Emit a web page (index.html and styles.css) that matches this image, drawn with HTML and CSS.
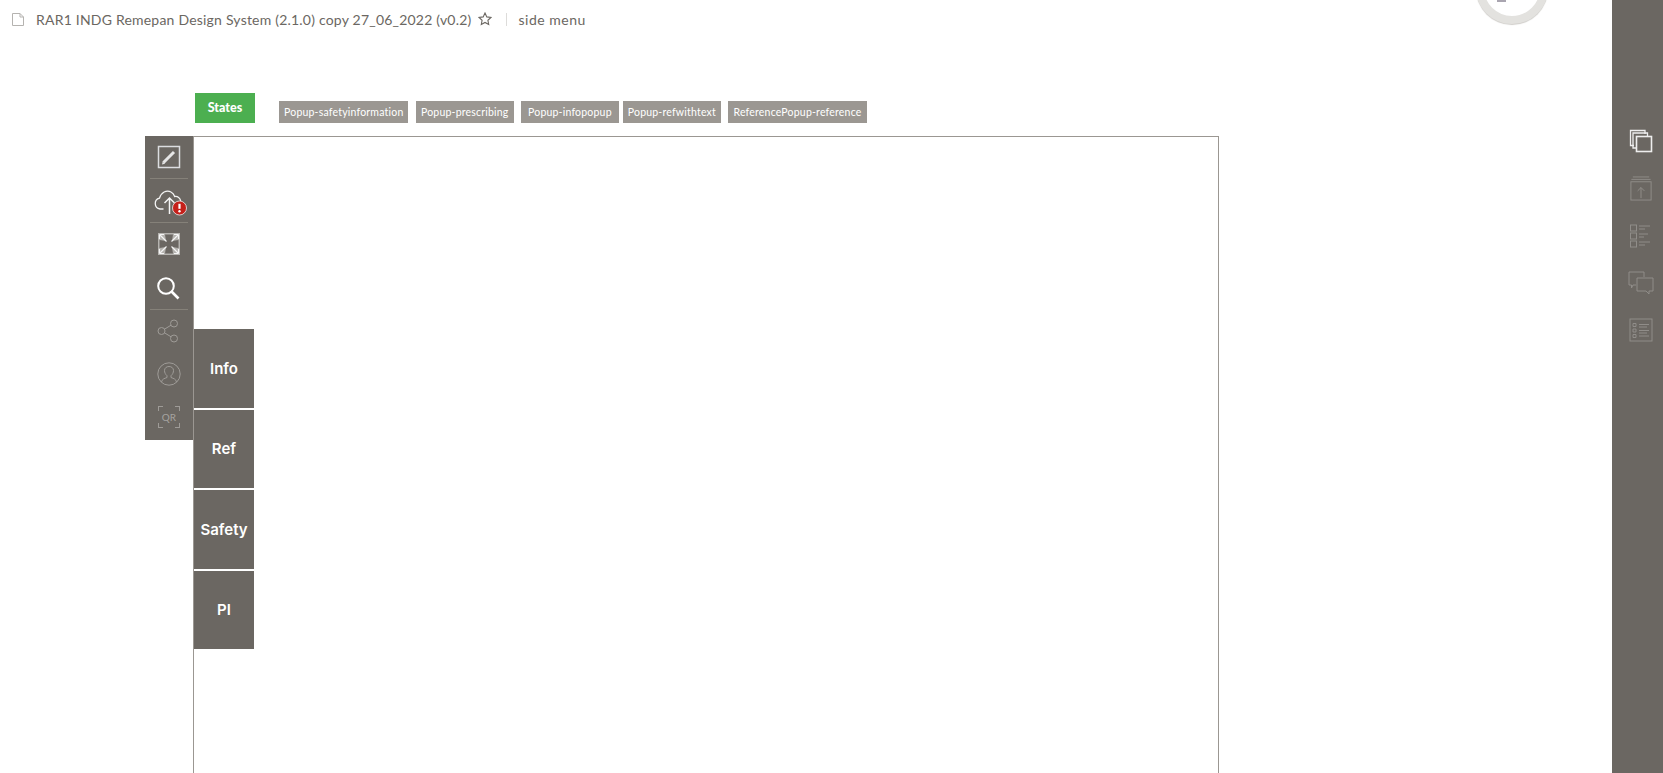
FILE: index.html
```html
<!DOCTYPE html>
<html lang="en">
<head>
    <meta charset="UTF-8">
    <title>side menu</title>
    <link rel="stylesheet" href="styles.css">
</head>
<body>
    <div class="page">
        <div class="main">
            <div class="topbar">
                <svg class="file-icon" width="12" height="13" viewBox="0 0 12 13"><path d="M.5.5h7.500l3.500 3.500v8.500h-11z M8 .5v3.500h3.500" fill="none" stroke="#b5b3b0"/></svg>
                <span class="file-name">RAR1 INDG Remepan Design System (2.1.0) copy 27_06_2022 (v0.2)</span>
                <svg class="star" width="14" height="14" viewBox="0 0 14 14"><path d="M7 1l1.800 3.900 4.200.5-3.100 2.900.8 4.200L7 10.400l-3.700 2.100.8-4.200L1 5.400l4.200-.5z" fill="none" stroke="#6b6762" stroke-width="1.100"/></svg>
                <span class="sep"></span>
                <span class="page-name">side menu</span>
            </div>

            <div class="states-row">
                <div class="states">States</div>
                <div class="popups">
                    <span class="popup">Popup-safetyinformation</span>
                    <span class="popup">Popup-prescribing</span>
                    <span class="popup tight">Popup-infopopup</span>
                    <span class="popup">Popup-refwithtext</span>
                    <span class="popup">ReferencePopup-reference</span>
                </div>
            </div>

            <div class="stage">
                <div class="tools">
                    <div class="tool line">
                        <svg class="up1" width="24" height="24" viewBox="0 0 24 24" fill="none"><rect x="1.500" y="1.500" width="21" height="21" stroke="#dcdde0" stroke-width="1.500"/><path d="M6.500 17.500L17 7" stroke="#e6e6e6" stroke-width="3"/><path d="M5 19.500l.7-3 2.300 2.300z" fill="#e6e6e6"/></svg>
                    </div>
                    <div class="tool line">
                        <svg width="36" height="30" viewBox="-1.500 -1 36 30" fill="none"><path d="M11 22H7.500a5.500 5.500 0 0 1-.5-10.800C8.500 5.500 14 2.500 18.500 5c2 1 3.200 3 3.700 4.500 3-.5 5.500 1.500 6 4.500" stroke="#f4f4f4" stroke-width="1.300"/><path d="M17 27V11M12 16l5-5 5 5" stroke="#f4f4f4" stroke-width="1.500"/><circle cx="27" cy="21" r="7" fill="#c5201a" stroke="#eee" stroke-width=".8"/><path d="M27 16.800v5" stroke="#fff" stroke-width="2.200"/><circle cx="27" cy="24.300" r="1.200" fill="#fff"/></svg>
                    </div>
                    <div class="tool">
                        <svg width="24" height="24" viewBox="0 0 24 24" fill="none"><rect x="1" y="1" width="22" height="22" fill="#b5b3af"/><path d="M8 2.500h8l-1 6.500 6.500-1v8L15 15l1 6.500H8L9 15l-6.500 1V8L9 9z" fill="#6b6762"/><path d="M3 3l6.500 6.500M21 3l-6.500 6.500M3 21l6.500-6.500M21 21l-6.500-6.500" stroke="#f4f4f4" stroke-width="1.200"/><path d="M2.500 2.500h4.500M2.500 2.500V7M21.500 2.500H17M21.500 2.500V7M2.500 21.500H7M2.500 21.500V17M21.500 21.500H17M21.500 21.500V17" stroke="#f4f4f4" stroke-width="1.200"/></svg>
                    </div>
                    <div class="tool line">
                        <svg class="left1" width="24" height="24" viewBox="0 0 24 24" fill="none" stroke="#fff"><circle cx="10" cy="10" r="7.800" stroke-width="2"/><path d="M15.500 15.500l7 7" stroke-width="2.600"/></svg>
                    </div>
                    <div class="tool dim">
                        <svg class="left1" width="22" height="24" viewBox="0 0 22 24" fill="none" stroke="#c9c7c4"><circle cx="4.500" cy="12" r="3.500"/><circle cx="17" cy="4.500" r="3.500"/><circle cx="17" cy="19.500" r="3.500"/><path d="M7.500 10.200l6.500-4M7.500 13.800l6.500 4"/></svg>
                    </div>
                    <div class="tool dim">
                        <svg class="up1" width="24" height="24" viewBox="0 0 24 24" fill="none" stroke="#c9c7c4"><circle cx="12" cy="12" r="11.200"/><path d="M4.500 20c.5-3 3-3.500 5.500-4.500v-1.800C8.500 12.500 7.500 10.500 7.500 8.500 7.500 6 9.500 4.500 12 4.500s4.500 1.500 4.500 4c0 2-1 4-2.500 5.200v1.800c2.500 1 5 1.500 5.500 4.500"/></svg>
                    </div>
                    <div class="tool dim">
                        <div class="qr">QR</div>
                    </div>
                </div>
                <div class="canvas">
                    <div class="tab">Info</div>
                    <div class="tab">Ref</div>
                    <div class="tab">Safety</div>
                    <div class="tab">PI</div>
                </div>
            </div>
        </div>

        <div class="side">
            <svg width="24" height="24" viewBox="0 0 24 24" fill="none" stroke="#eeeeee" stroke-width="1.300"><path d="M5 16.500H1.500V1.500H16V5"/><path d="M7.500 19H4V4h14.500v3"/><rect x="7.500" y="7.500" width="15" height="15" stroke-width="1.600"/></svg>
            <svg class="off" width="24" height="25" viewBox="0 0 24 26" fill="none" stroke="#c9c7c4"><path d="M3.500 1h17M2 3.500h20"/><rect x="1.500" y="6" width="21" height="19"/><path d="M12 23V12M8.500 15.500L12 12l3.500 3.500"/></svg>
            <svg class="off" width="24" height="24" viewBox="0 0 24 24" fill="none" stroke="#c9c7c4"><rect x="1.500" y="1" width="6" height="6"/><rect x="1.500" y="9" width="6" height="6"/><rect x="1.500" y="17" width="6" height="6"/><path d="M10 2h11M10 5h6M10 10h9M10 13h5M10 18h11M10 21h6"/></svg>
            <svg class="off" width="26" height="24" viewBox="0 0 26 24" fill="none" stroke="#c9c7c4"><path d="M8 14H5l-1.500 3v-3H1V1h15v5"/><path d="M9 7h16v13h-4v3l-3-3H9z"/></svg>
            <svg class="off" width="24" height="24" viewBox="0 0 24 24" fill="none" stroke="#c9c7c4"><rect x="1" y="1" width="22" height="22"/><path d="M4 5.500h3v3H4zM4 11h3v3H4zM4 16.500h3v3H4zM10 6.500h10M10 9h8M10 12.500h10M10 15h8M10 18h10"/></svg>
        </div>
    </div>

    <!-- dial that sticks out of the top of the window -->
    <div class="dial"><span></span></div>
</body>
</html>
```

FILE: styles.css
```css
html, body {
    margin: 0;
    height: 100%;
    overflow: hidden;
    background: #fff;
}
body {
    font-family: "Lato", "Liberation Sans", sans-serif;
    color: #6b6762;
}
.page {
    display: flex;
    height: 100vh;
}
.main {
    display: flex;
    flex-direction: column;
    flex: 1;
    min-width: 0;
}

/* top line */
.topbar {
    display: flex;
    align-items: center;
    height: 38px;
    padding-left: 12px;
    font-size: 14px;
}
.file-name {
    margin-left: 12px;
    letter-spacing: 0.21px;
}
.star {
    margin-left: 6px;
}
.sep {
    width: 1px;
    height: 13px;
    margin: 0 12px 0 14px;
    background: #dddcda;
}
.page-name {
    letter-spacing: 0.5px;
}

/* states and popup buttons */
.states-row {
    display: flex;
    align-items: flex-end;
    height: 85px;
    margin-left: 195px;
    margin-bottom: 13px;
}
.states {
    width: 60px;
    height: 30px;
    line-height: 30px;
    text-align: center;
    background: #4caf50;
    color: #fff;
    font-size: 12.500px;
    font-weight: 900;
}
.popups {
    display: flex;
    gap: 7.500px;
    margin-left: 24px;
}
.popup {
    height: 22px;
    line-height: 22px;
    padding: 0 5px;
    background: #9b9792;
    color: #fff;
    font-size: 10.500px;
    letter-spacing: 0.2px;
    white-space: nowrap;
}
.popup.tight {
    padding: 0 7px;
    margin-right: -3.500px;
}

/* left tools + white artboard */
.stage {
    display: flex;
    align-items: flex-start;
    flex: 1;
    min-height: 0;
    margin-left: 145px;
}
.tools {
    width: 48px;
    height: 304px;
    background: #6b6762;
}
.tool {
    position: relative;
    display: flex;
    align-items: center;
    justify-content: center;
    height: 43.400px;
    box-sizing: border-box;
}
.tool.line::after {
    content: "";
    position: absolute;
    left: 5px;
    right: 5px;
    bottom: 0;
    height: 1px;
    background: #858179;
}
.up1 {
    margin-bottom: 2px;
}
.left1 {
    margin-right: 2px;
}
.dim {
    opacity: 0.55;
}
.qr {
    width: 22px;
    height: 22px;
    margin-bottom: 3px;
    line-height: 22px;
    text-align: center;
    font-size: 10px;
    color: #d6d5d3;
    background:
        linear-gradient(#c9c7c4, #c9c7c4) 0 0 / 5px 1px,
        linear-gradient(#c9c7c4, #c9c7c4) 0 0 / 1px 5px,
        linear-gradient(#c9c7c4, #c9c7c4) 100% 0 / 5px 1px,
        linear-gradient(#c9c7c4, #c9c7c4) 100% 0 / 1px 5px,
        linear-gradient(#c9c7c4, #c9c7c4) 0 100% / 5px 1px,
        linear-gradient(#c9c7c4, #c9c7c4) 0 100% / 1px 5px,
        linear-gradient(#c9c7c4, #c9c7c4) 100% 100% / 5px 1px,
        linear-gradient(#c9c7c4, #c9c7c4) 100% 100% / 1px 5px;
    background-repeat: no-repeat;
}
.canvas {
    display: flex;
    flex-direction: column;
    gap: 2px;
    width: 1026px;
    height: 100%;
    box-sizing: border-box;
    padding-top: 192px;
    border: 1px solid #9b9792;
    border-bottom: 0;
}
.tab {
    display: flex;
    align-items: center;
    justify-content: center;
    width: 60px;
    height: 78.500px;
    background: #6b6762;
    color: #fff;
    font-family: "Inter", "Liberation Sans", sans-serif;
    font-size: 15px;
    font-weight: 600;
}

/* right panel */
.side {
    display: flex;
    flex-direction: column;
    align-items: center;
    gap: 23px;
    width: 51px;
    padding-top: 129px;
    background: #6b6762;
    box-sizing: border-box;
}
.side svg {
    flex: none;
    margin-left: 6px;
}
.side .off {
    opacity: 0.4;
}

.dial {
    position: absolute;
    left: 1476px;
    top: -48px;
    width: 72px;
    height: 72px;
    box-sizing: border-box;
    border: 8px solid #e3e2df;
    border-radius: 50%;
    background: #fff;
    box-shadow: 0 1px 1px #cfcdc9;
}
.dial span {
    position: absolute;
    left: 13px;
    top: 32px;
    width: 9px;
    height: 10px;
    background: #a9a5b0;
}
```
